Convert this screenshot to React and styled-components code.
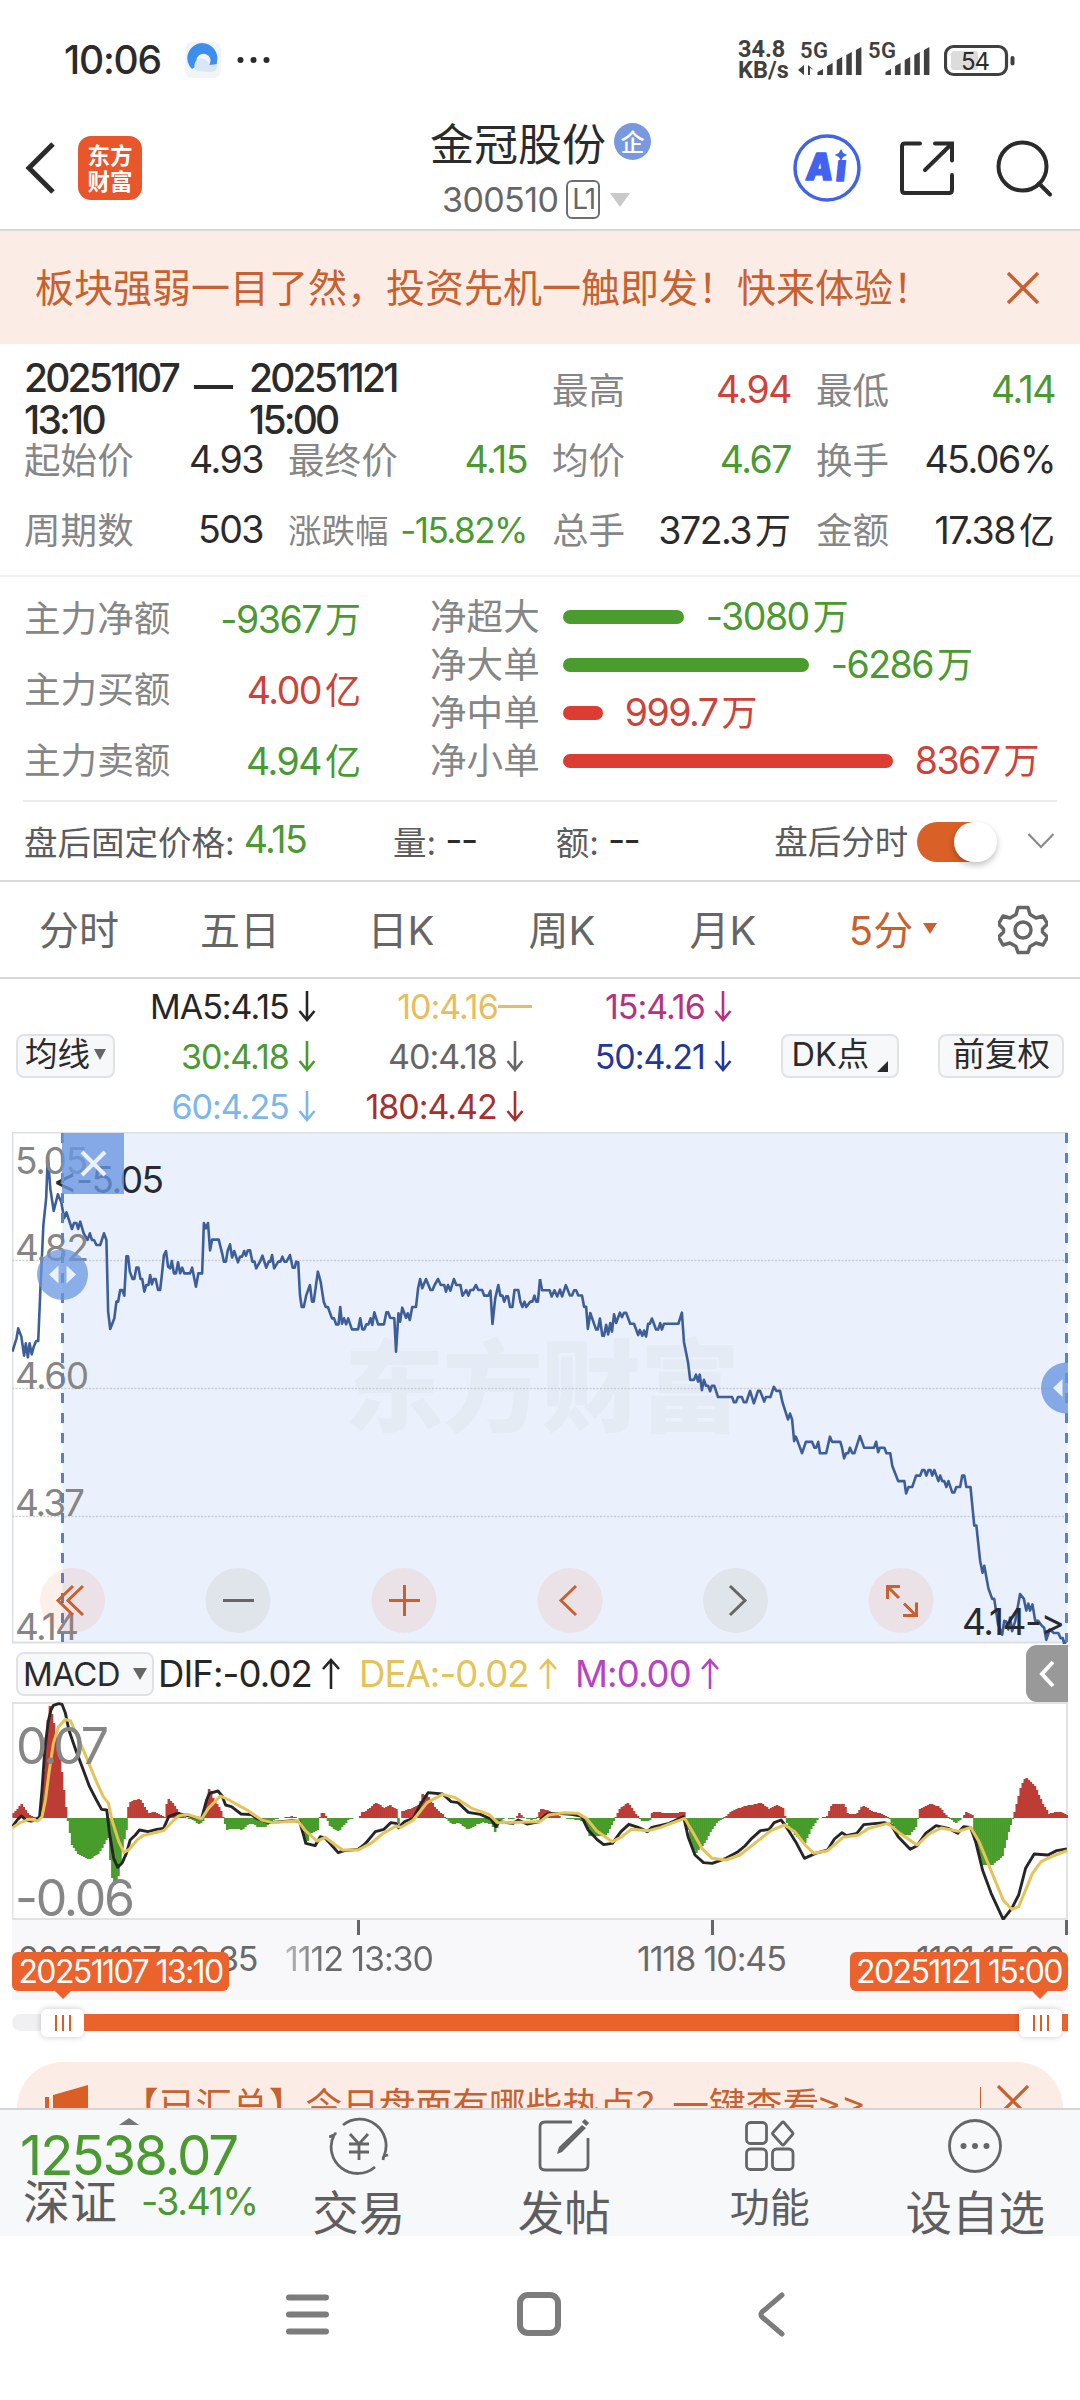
import React from 'react';
import styled, {createGlobalStyle, css} from 'styled-components';

const RED = '#cc4339'
const GREEN = '#4a9a31'
const DARK = '#2b2b2b'
const GRAY = '#868686'
const MID = '#666'
const ORANGE = '#c9602f'

const stats = [
  ['最高', '4.94', '', RED], ['最低', '4.14', '', GREEN],
  ['起始价', '4.93', '', DARK], ['最终价', '4.15', '', GREEN], ['均价', '4.67', '', GREEN], ['换手', '45.06%', '', DARK],
  ['周期数', '503', '', DARK], ['涨跌幅', '-15.82%', '', GREEN], ['总手', '372.3', '万', DARK], ['金额', '17.38', '亿', DARK],
]

const mainFlow = [
  ['主力净额', '-9367', '万', GREEN],
  ['主力买额', '4.00', '亿', RED],
  ['主力卖额', '4.94', '亿', GREEN],
]

const netFlow = [
  ['净超大', 121, '-3080', GREEN, '#4a9c2f'],
  ['净大单', 246, '-6286', GREEN, '#4a9c2f'],
  ['净中单', 40, '999.7', RED, '#dd3c33'],
  ['净小单', 330, '8367', RED, '#dd3c33'],
]

const averages = [
  ['MA5:4.15', '#262626', 'down'], ['10:4.16', '#e8bd5c', 'flat'], ['15:4.16', '#b5327f', 'down'],
  ['30:4.18', GREEN, 'down'], ['40:4.18', MID, 'down'], ['50:4.21', '#23379b', 'down'],
  ['60:4.25', '#7db6e8', 'down'], ['180:4.42', '#a53030', 'down'],
]

// price line, left and right half of the session
const priceLeft = '36,680 48,640 53,610 62,635 70,692 75,655 81,697 86,655 92,688 98,665 105,648 111,648 117,500 126,300 134,220 139,90 146,190 156,258 168,208 178,232 186,280 193,262 209,312 215,294 222,294 227,312 233,290 243,325 254,345 261,325 267,345 273,345 280,360 291,360 302,325 309,345 314,560 320,612 332,580 338,530 343,530 349,495 355,495 361,512 367,394 372,394 377,440 385,462 390,462 396,428 402,428 408,462 413,462 419,500 425,480 431,480 436,450 441,478 446,462 452,462 459,495 465,495 470,450 476,390 482,378 488,425 494,430 499,408 505,445 511,445 517,412 523,445 529,428 535,445 552,445 558,428 564,460 569,485 576,445 587,445 592,294 598,310 604,294 610,376 616,344 635,344 645,385 650,410 656,410 661,378 668,358 674,398 680,378 691,412 697,395 703,395 709,378 714,392 720,376 726,376 733,410 739,410 744,430 755,410 762,392 773,428 780,410 785,410 790,390 796,430 808,410 814,410 820,395 826,410 832,410 842,390 850,428 856,428 860,410 866,412 871,510 876,546 882,546 889,512 900,480 906,530 911,530 923,440 931,470 940,530 946,546 952,546 964,580 970,580 976,598 983,598 988,546 993,596 999,580 1005,598 1011,580 1022,613 1040,613 1046,580 1052,613 1058,613 1064,598 1070,598 1076,580 1081,600 1087,562 1098,598 1115,598 1122,562 1127,562 1133,578 1145,580 1150,680 1157,565 1162,590 1168,548 1179,578 1184,565 1190,585 1197,546 1208,546 1214,490 1220,462 1226,490 1237,462 1250,495 1256,495 1262,480 1272,462 1280,480 1290,480 1295,500 1301,480 1308,497 1318,462 1325,480 1337,480 1343,512 1354,495 1360,512 1366,495 1374,495 1382,480 1389,495 1400,495 1406,512 1418,512 1424,497 1430,597 1438,520 1447,480 1453,512 1459,512 1464,530 1470,514 1475,514 1481,546 1488,546 1494,495 1505,495 1511,530 1517,546 1523,530 1528,546 1540,530 1546,530 1552,512 1557,530 1562,530 1568,462'
const priceRight = '0,448 6,480 28,480 34,498 42,480 50,498 58,478 64,498 75,465 87,495 93,495 99,480 105,480 111,495 122,495 128,528 134,528 139,592 146,546 163,594 168,594 174,562 181,612 186,612 192,580 198,608 204,575 209,600 215,550 221,575 232,545 238,558 244,545 250,545 262,577 273,577 285,610 290,595 297,612 302,597 308,614 314,577 319,577 325,562 337,594 343,594 349,575 354,594 360,577 402,577 412,545 418,630 430,690 436,740 447,740 453,725 459,745 464,725 470,770 476,740 482,757 488,757 494,773 499,757 506,757 517,790 558,790 563,805 569,805 575,790 586,790 592,805 599,805 610,772 621,808 633,772 639,772 651,803 656,790 669,790 679,760 686,772 697,772 704,805 720,855 726,838 732,855 738,918 743,905 761,953 772,920 790,920 797,937 802,937 808,920 813,953 831,953 842,905 848,920 872,920 877,937 883,968 889,953 895,953 900,937 907,953 913,953 929,903 941,937 970,937 976,920 982,950 987,937 1000,937 1006,953 1017,953 1023,990 1040,1034 1058,1034 1063,1070 1070,1051 1081,1051 1092,1018 1104,1018 1110,1002 1116,1002 1122,1018 1128,1002 1134,1002 1139,1018 1145,1002 1157,1034 1162,1018 1168,1034 1174,1034 1180,1051 1186,1034 1197,1067 1203,1067 1209,1051 1220,1051 1226,1018 1232,1018 1238,1051 1250,1051 1261,1163 1267,1163 1278,1265 1285,1300 1290,1280 1302,1345 1313,1376 1319,1376 1330,1450 1342,1480 1348,1440 1354,1442 1360,1465 1365,1430 1371,1470 1380,1440 1394,1362 1405,1376 1412,1410 1418,1390 1423,1410 1430,1392 1438,1440 1447,1440 1458,1455 1464,1460 1470,1495 1480,1465 1492,1475 1505,1475 1512,1490 1518,1490 1523,1510 1528,1495'

const difLeft = '36,560 50,540 62,528 75,540 90,543 105,540 115,530 122,450 130,330 140,245 148,210 155,196 170,191 180,193 190,220 200,270 220,330 240,385 260,440 280,480 295,508 310,510 318,580 330,655 342,682 355,668 367,640 378,600 393,585 405,570 430,575 455,568 475,565 490,530 515,520 545,527 585,537 600,480 608,460 633,453 645,468 655,495 672,500 700,522 730,524 745,535 780,548 850,542 870,545 880,580 888,610 915,617 930,590 945,595 965,618 982,638 1000,632 1040,628 1060,612 1090,575 1115,568 1135,548 1150,550 1157,563 1175,545 1200,535 1220,495 1243,458 1285,462 1310,485 1330,488 1360,517 1395,523 1425,537 1440,560 1450,545 1490,550 1505,540 1530,552 1568,545'
const difRight = '0,540 20,522 50,520 90,523 120,528 140,570 165,598 185,614 210,610 235,575 258,553 285,562 312,575 325,562 375,550 417,530 430,590 450,645 475,668 500,670 540,655 575,635 595,618 615,595 640,572 665,568 680,548 700,540 715,560 745,610 768,655 800,640 835,630 855,597 877,578 890,587 920,580 940,554 1000,548 1020,555 1040,590 1075,628 1095,617 1120,580 1150,557 1185,565 1213,580 1230,560 1250,562 1265,605 1285,690 1310,760 1345,838 1370,805 1390,765 1410,685 1435,642 1475,645 1500,632 1530,627'
const deaLeft = '36,563 60,547 85,538 110,543 122,530 132,480 142,400 155,310 170,260 190,238 205,243 225,290 250,350 280,425 300,470 315,490 325,540 345,605 360,637 375,628 400,598 415,587 475,572 500,545 520,527 545,523 585,537 605,505 640,468 665,480 720,512 760,540 790,548 865,542 885,570 920,603 945,592 970,612 995,630 1040,630 1080,608 1110,582 1150,558 1165,562 1200,540 1240,488 1285,463 1320,472 1370,505 1420,523 1445,548 1568,545'
const deaRight = '0,545 25,525 70,518 110,520 135,535 165,573 210,605 235,592 265,568 315,572 350,562 420,535 440,570 470,625 500,655 540,660 580,645 630,605 670,572 710,555 740,575 770,615 795,640 835,632 880,592 925,585 955,565 1010,550 1045,580 1095,615 1130,582 1165,564 1215,574 1250,562 1275,605 1305,680 1345,780 1370,808 1390,800 1430,700 1455,665 1490,648 1530,632'

const histLeft = '36,15 60,42 80,10 95,2 112,5 122,110 130,250 141,338 152,290 162,230 175,150 185,60 192,0 196,-20 205,-80 225,-110 255,-125 285,-105 308,-60 312,-60 320,-170 330,-206 342,-170 350,-100 365,-30 368,0 370,45 385,52 403,58 418,30 430,12 442,20 465,8 475,2 483,60 495,50 515,20 525,10 535,2 560,-8 575,-18 587,-8 592,30 605,95 615,60 640,20 645,0 655,-35 680,-32 700,-36 715,-22 730,-15 745,-28 765,-28 785,-10 800,-2 815,0 845,6 860,0 872,-20 885,-82 900,-45 920,-35 923,-2 933,20 945,2 955,-25 980,-40 1000,-15 1012,-2 1040,0 1045,15 1065,25 1090,47 1110,30 1130,38 1150,25 1153,-20 1165,20 1190,28 1215,40 1222,72 1245,62 1260,30 1285,8 1290,0 1310,-18 1330,-15 1355,-35 1380,-20 1400,-12 1425,-20 1437,-50 1443,-10 1465,0 1490,-5 1505,17 1515,2 1540,-5 1556,0 1566,25'
const histRight = '0,27 20,22 45,12 60,0 120,-8 130,-15 140,-55 165,-55 190,-50 215,0 230,30 252,45 270,20 285,0 290,-8 315,-10 320,15 330,20 360,15 415,17 417,25 422,-10 435,-80 450,-105 475,-75 495,-35 515,-8 530,0 550,18 575,30 600,38 640,45 660,28 685,38 705,28 710,-10 740,-55 765,-78 785,-30 805,0 830,3 845,42 880,42 890,12 915,12 935,38 960,20 990,12 1010,2 1020,-20 1045,-50 1070,-52 1090,-25 1100,28 1130,42 1155,35 1180,3 1190,-5 1205,-15 1222,0 1235,20 1252,8 1256,-60 1280,-140 1308,-142 1340,-115 1355,-50 1368,-5 1375,20 1395,100 1408,123 1435,95 1455,45 1475,12 1500,20 1528,10'

const HALF = 'scale(.34438 .33333)'
const SQUARE = 'scale(.34438)'

function parse(s) {
  return s.split(' ').map(p => p.split(',').map(Number))
}

// fills the gaps between the key points with one bar for each 5 minutes
function makeBars(s) {
  const pts = parse(s)
  const bars = []
  let k = 0
  for(let x = pts[0][0]; x < pts[pts.length-1][0]; x += 5.85) {
    while(pts[k+1][0] < x) k++
    const [x0, h0] = pts[k]
    const [x1, h1] = pts[k+1]
    bars.push({x, h: Math.round((h0 + (h1-h0)*(x-x0)/(x1-x0))/3)*3})
  }
  return bars
}

function Hist({data}) {
  return makeBars(data).map(b => b.h !== 0 && <rect key={b.x} x={b.x} width="7.500"
    y={b.h > 0 ? 534-b.h : 534} height={Math.abs(b.h)} fill={b.h > 0 ? '#bd3c35' : '#479c2b'} />)
}

function Line({points, color, width}) {
  return <polyline points={points} fill="none" stroke={color} strokeWidth={width}
    strokeLinejoin="round" vectorEffect="non-scaling-stroke" />
}

function Arrow({dir, h=32}) {
  return <svg width="18" height={h} viewBox="0 0 18 32" fill="none" stroke="currentColor" strokeWidth="2.6">
    {dir==='down' ? <path d="M9 1v29M1.500 21l7.500 9 7.500-9" /> : <path d="M9 31V2M1 11l8-9 8 9" />}
  </svg>
}

function Amount({c, small, unit, children}) {
  return <Value c={c} small={small}>{children}{unit && <Unit>{unit}</Unit>}</Value>
}

function StatusBar() {
  return <Status>
    <Clock>10:06</Clock>
    <svg width="38" height="38" viewBox="0 0 38 38">
      <rect x="1" y="1" width="36" height="36" rx="8" fill="#f1f4f8" />
      <path d="M8 28A15 15 0 1 1 33 20c0 4-1 7-3 8l-5-4a7 7 0 1 0-11 0z" fill="#3c8fee" />
      <path d="M13 30a7 7 0 0 1 2-12c7-2 9 4 11 6l7-1c1 5-2 8-6 8z" fill="#dbe6f5" />
    </svg>
    <Dots width="34" height="8" viewBox="0 0 34 8" fill={DARK}>
      <circle cx="3.500" cy="4" r="3" /><circle cx="16.500" cy="4" r="3" /><circle cx="29.500" cy="4" r="3" />
    </Dots>
    <Speed>34.8<br/>KB/s</Speed>
    <Signals width="134" height="38" viewBox="798 40 134 38" fill="#404040">
      <text x="800" y="57" fontFamily="Roboto" fontSize="22" fontWeight="600" textLength="28">5G</text>
      <text x="868" y="57" fontFamily="Roboto" fontSize="22" fontWeight="600" textLength="28">5G</text>
      <path d="M804 64v10l-6-5zM808 64v10h2v-7l4 2z" />
      {[0, 68].map(d => [6, 12, 18, 23, 28].map((h, i) =>
        <path key={d+i} d={`M${817.5+d+i*9.6} 74v${3-h}l5.500-3v${h}z`} />))}
    </Signals>
    <svg width="72" height="34" viewBox="944 42 72 34">
      <rect x="945.500" y="45.500" width="61" height="28" rx="8" fill="none" stroke="#404040" strokeWidth="3.200" />
      <rect x="951" y="50" width="27" height="19" rx="3" fill="#dcdcdc" />
      <rect x="1010.500" y="55" width="4" height="9.500" rx="2" fill="#404040" />
      <text x="961" y="68.500" fontFamily="Inter" fontSize="24" fontWeight="400" textLength="29" fill={DARK}>54</text>
    </svg>
  </Status>
}

function TitleBar() {
  return <Title>
    <svg width="30" height="54" viewBox="0 0 30 54" fill="none" stroke={DARK} strokeWidth="5">
      <path d="M28 3L4 27l24 24" />
    </svg>
    <Logo>东方<br/>财富</Logo>
    <Name>
      <NameRow>金冠股份<Badge>企</Badge></NameRow>
      <CodeRow>300510<Level>L1</Level><Tri w={10.5} h={14} c="#c9c9c9" /></CodeRow>
    </Name>
    <Tools>
      <svg width="70" height="70" viewBox="791 132 70 70">
        <circle cx="826" cy="167" r="32" fill="none" stroke="#4263e6" strokeWidth="3.500" />
        <g fill="#4263f2" stroke="#4263f2" strokeWidth="1.500" strokeLinejoin="round" fontFamily="Inter" fontSize="37" fontWeight="900">
          <text transform="translate(804 178.500) skewX(-6)" textLength="27" lengthAdjust="spacingAndGlyphs">A</text>
          <text transform="translate(834 180) skewX(-6)" textLength="10" lengthAdjust="spacingAndGlyphs">ı</text>
        </g>
        <path d="M840 148l2.200 4 4 2-4 2-2.200 4-2.200-4-4-2 4-2z" fill="#4263f2" />
      </svg>
      <svg width="58" height="58" viewBox="900 138 58 58" fill="none" stroke={DARK} strokeWidth="4" strokeLinecap="round">
        <path d="M920 142.500h-15q-3 0-3 3v43.500q0 3 3 3h44q3 0 3-3v-15M925 169l26-25.500M935 142.500h17v17" />
      </svg>
      <svg width="58" height="58" viewBox="995 137 58 58" fill="none" stroke={DARK} strokeWidth="4" strokeLinecap="round">
        <circle cx="1022.500" cy="164.500" r="24" /><path d="M1039 181.500l11 11" />
      </svg>
    </Tools>
  </Title>
}

function PriceChart() {
  const orangeBg = 'rgba(232,100,40,.1)'
  const grayBg = 'rgba(150,150,110,.12)'
  return <Chart height="512" viewBox="12 1132 1056 512">
    <rect x="62.500" y="1133" width="1005" height="509" fill="#eaf1fc" />
    <path d="M12 1132.500h1056M12.500 1132v511M12 1642.500h1056" stroke="#dcdfe4" strokeWidth="2" />
    <text x="344" y="1424" fontFamily="Noto Sans CJK SC" fontSize="100" fontWeight="900" textLength="396" fill="#e4ebf5">东方财富</text>
    <path d="M12 1260.500h1056M12 1388.500h1056M12 1516.500h1056" stroke="#c9ced8" strokeWidth="1.500" strokeDasharray="2 1.500" />
    <g transform={`translate(0 1125) ${HALF}`}><Line points={priceLeft} color="#3d5e99" width="2.600" /></g>
    <g transform={`translate(540 1125) ${SQUARE}`}><Line points={priceRight} color="#3d5e99" width="2.600" /></g>
    <Labels size={37}>
      <text x="15" y="1173.500" textLength="73">5.05</text>
      <text x="15" y="1261" textLength="74">4.82</text>
      <text x="15" y="1388.500" textLength="74">4.60</text>
      <text x="15" y="1516" textLength="70">4.37</text>
      <text x="15" y="1639.500" textLength="64">4.14</text>
      <text x="53" y="1193" textLength="111" fill="#252a33">&lt;-5.05</text>
      <text x="962" y="1634.500" textLength="103" fill="#252a33">4.14-&gt;</text>
    </Labels>
    <path d="M62.500 1133v509M1066.500 1133v509" stroke="#5682cb" strokeWidth="3" strokeDasharray="10 10" />
    <rect x="62" y="1133" width="62" height="61" fill="#6a97e0" opacity=".8" />
    <path d="M82 1152l23 23M105 1152l-23 23" stroke="#eaf1fc" strokeWidth="4" />
    <circle cx="62.500" cy="1274.500" r="25.500" fill="#6a97e0" opacity=".75" />
    <path d="M49 1274.500l9.500-9v18zM76 1274.500l-9.500-9v18z" fill="#eaf1fc" />
    <circle cx="1066.500" cy="1388" r="25.500" fill="#6a97e0" opacity=".8" />
    <path d="M1053 1388l9.500-9v18z" fill="#eaf1fc" />
    {[72.5, 238, 404, 570, 735.5, 901].map((cx, i) =>
      <circle key={cx} cx={cx} cy="1600.500" r="32.500" fill={i===1 || i===4 ? grayBg : orangeBg} />)}
    <g fill="none" stroke={ORANGE} strokeWidth="3">
      <path d="M73 1586l-15 14.500 15 14.500M83 1586l-15 14.500 15 14.500" />
      <path d="M389 1600.500h31M404.500 1585v31" />
      <path d="M576 1586l-15 14.500 15 14.500" />
      <path d="M887.500 1599v-12.500h12.500M888 1587l11 11M904 1603.500l11 11M903 1615.500h13.500v-13" />
      <path d="M223 1600.500h31M730 1586l15 14.500-15 14.500" stroke={MID} />
    </g>
  </Chart>
}

function MacdChart() {
  return <Chart height="218" viewBox="12 1702 1056 218">
    <path d="M12 1703h1056M12.500 1702v218M12 1919h1056M1067 1702v218" stroke="#e2e2e2" strokeWidth="2" fill="none" />
    <g transform={`translate(0 1640) ${HALF}`}>
      <Hist data={histLeft} />
      <Line points={difLeft} color="#262626" width="2.900" />
      <Line points={deaLeft} color="#e5c358" width="3" />
    </g>
    <g transform={`translate(540 1640) ${HALF}`}>
      <Hist data={histRight} />
      <Line points={difRight} color="#262626" width="2.900" />
      <Line points={deaRight} color="#e5c358" width="3" />
    </g>
    <Labels size={50}>
      <text x="16" y="1764" textLength="93">0.07</text>
      <text x="15" y="1916" textLength="120">-0.06</text>
    </Labels>
  </Chart>
}

function NavIcon({name}) {
  return <svg width="60" height="60" viewBox="-30 -30 60 60" fill="none" stroke={MID} strokeWidth="2.800">
    {name==='trade' && <>
      <path d="M-16-21A26.500 26.500 0 0 1 25 10l4-1M16 21A26.500 26.500 0 0 1-25-11l-5 2M-25-11l2-2M25 10l-1 4" />
      <path d="M-9-12L0-2l9-10M0-2v16M-10-2h20M-10 6h20" />
    </>}
    {name==='post' && <>
      <path d="M8-24h-27q-5 0-5 5v38q0 5 5 5h38q5 0 5-5V-8" />
      <path d="M-7 8l2-7L18-21l4 3L-2 6z" fill={MID} stroke="none" />
      <path d="M20-22l3-3" strokeWidth="6" />
    </>}
    {name==='more' && <>
      <rect x="-23.500" y="-23.500" width="20" height="21" rx="4" /><rect x="-23.500" y="3" width="20" height="20.500" rx="4" />
      <rect x="2.500" y="3" width="20.500" height="20.500" rx="4" /><path d="M12-23.500q1-1 2 0l8.500 10q1 1 0 2L14-1.500q-1 1-2 0L3-11.500q-1-1 0-2z" />
    </>}
    {name==='add' && <>
      <circle r="25.500" />
      <g fill={MID} stroke="none"><circle cx="-11.500" r="3" /><circle r="3" /><circle cx="11.500" r="3" /></g>
    </>}
  </svg>
}

function App() {
  return (
    <Page>
      <GlobalStyle />
      <StatusBar />
      <TitleBar />

      <Promo>
        板块强弱一目了然，投资先机一触即发！快来体验！
        <svg width="32" height="32" viewBox="0 0 32 32" stroke={ORANGE} strokeWidth="3.500"><path d="M1 1l30 30M31 1L1 31" /></svg>
      </Promo>

      <Stats>
        <Dates>
          <span>20251107<br/>13:10</span>
          <Dash />
          <span>20251121<br/>15:00</span>
        </Dates>
        {stats.map(([label, value, unit, color]) => <Stat key={label}>
          <Label small={label==='涨跌幅'}>{label}</Label>
          <Amount c={color} unit={unit} small={label==='涨跌幅'}>{value}</Amount>
        </Stat>)}
      </Stats>

      <Flows>
        <MainFlow>
          {mainFlow.map(([label, value, unit, color]) => <Stat key={label}>
            <Label>{label}</Label><Amount c={color} unit={unit}>{value}</Amount>
          </Stat>)}
        </MainFlow>
        <NetFlow>
          {netFlow.map(([label, width, value, color, bar]) => <NetRow key={label}>
            <Label>{label}</Label><Bar c={bar} style={{width}} /><Amount c={color} unit="万">{value}</Amount>
          </NetRow>)}
        </NetFlow>
      </Flows>

      <AfterHours>
        <Pair w={370}>盘后固定价格:<Value c={GREEN}>4.15</Value></Pair>
        <Pair w={163}>量:<Value c={DARK}>--</Value></Pair>
        <Pair w={219}>额:<Value c={DARK}>--</Value></Pair>
        <Lift>盘后分时</Lift>
        <Toggle><Knob /></Toggle>
        <svg width="28" height="18" viewBox="0 0 28 18" fill="none" stroke="#8a8a8a" strokeWidth="2.200"><path d="M1.500 2L14 15 26.500 2" /></svg>
      </AfterHours>

      <Tabs>
        {['分时', '五日', '日K', '周K', '月K'].map(t => <Tab key={t}>{t}</Tab>)}
        <Tab active>5分<Tri w={7} h={11} c={ORANGE} /></Tab>
        <Gear>
          <svg width="50" height="50" viewBox="-25 -25 50 50" fill="none" stroke={MID} strokeWidth="3.500" strokeLinejoin="round">
            <path d="M-5-22.500h10l2 7 6 3.500 7-2 4.500 8-5 5v3l5 5-4.500 8-7-2-6 3.500-2 6h-10l-2-6-6-3.500-7 2-4.500-8 5-5v-3l-5-5 4.500-8 7 2 6-3.500z" />
            <circle r="8" />
          </svg>
        </Gear>
      </Tabs>

      <Indicators>
        <Chip w={99}>均线<Tri w={6.5} h={11} c={MID} gap={4} /></Chip>
        <Averages>
          {averages.map(([text, color, dir]) => <Average key={text} c={color} flat={dir==='flat'}>
            {text}{dir==='flat' ? <Flat /> : <Arrow dir={dir} />}
          </Average>)}
        </Averages>
        <Chip w={119} left={48}>DK点<Corner /></Chip>
        <Chip w={126} left={39}>前复权</Chip>
      </Indicators>

      <PriceChart />

      <MacdHead>
        <Chip w={138} wide>MACD<Tri w={7} h={12} c={MID} gap={13} /></Chip>
        <Legend c="#262626" w={201}>DIF:-0.02<Arrow dir="up" /></Legend>
        <Legend c="#e5c358" w={216}>DEA:-0.02<Arrow dir="up" /></Legend>
        <Legend c="#b942c4" w={160}>M:0.00<Arrow dir="up" /></Legend>
        <Collapse>
          <svg width="16" height="28" viewBox="0 0 16 28" fill="none" stroke="#fff" strokeWidth="4"><path d="M14 2L3 14l11 12" /></svg>
        </Collapse>
      </MacdHead>

      <MacdChart />

      <Axis>
        <Ticks><i /><i /><i /></Ticks>
        <Times>
          <Time w={238}>20251107 09:35</Time>
          <Time w={150} left={29} fade>1112 13:30</Time>
          <Time w={152} left={202}>1118 10:45</Time>
          <Time w={150} left={127}>1121 15:00</Time>
        </Times>
        <Tag start>20251107 13:10</Tag>
        <Tag>20251121 15:00</Tag>
      </Axis>

      <Slider>
        <Empty />
        <Handle><i /><i /><i /></Handle>
        <Filled />
        <Handle><i /><i /><i /></Handle>
        <End />
      </Slider>

      <News>
        <svg width="44" height="46" viewBox="0 0 44 46" fill="#d95f27"><path d="M0 12h4v34H0zM8 10L43 0v46H8z" /></svg>
        <NewsText>【已汇总】今日盘面有哪些热点？一键查看<span>&gt;&gt;</span></NewsText>
        <Divider />
        <svg width="32" height="32" viewBox="0 0 32 32" stroke={ORANGE} strokeWidth="3.200"><path d="M1 1l30 30M31 1L1 31" /></svg>
      </News>

      <BottomNav>
        <Index>
          <Up />
          <IndexPrice>12538.07</IndexPrice>
          <IndexRow>深证<Value c={GREEN}>-3.41%</Value></IndexRow>
        </Index>
        <NavItem><NavIcon name="trade" />交易</NavItem>
        <NavItem><NavIcon name="post" />发帖</NavItem>
        <NavItem small><NavIcon name="more" />功能</NavItem>
        <NavItem><NavIcon name="add" />设自选</NavItem>
      </BottomNav>

      <SystemNav>
        <svg width="500" height="48" viewBox="285 2290 500 48" fill="none" stroke="#7c7c7c" strokeWidth="6" strokeLinecap="round" strokeLinejoin="round">
          <path d="M289 2297.500h37M289 2314.500h37M289 2331.500h37" />
          <rect x="520" y="2295" width="38" height="38" rx="8" />
          <path d="M782 2295l-20 17q-2 2.500 0 5l20 17" strokeWidth="5" />
        </svg>
      </SystemNav>
    </Page>
  );
}

const GlobalStyle = createGlobalStyle`
  body {
    margin: 0;
    background: #fff;
  }
  * {
    box-sizing: border-box;
  }
  svg {
    display: block;
    flex-shrink: 0;
  }
`
const Page = styled.div`
  width: 1080px;
  height: 2400px;
  overflow: hidden;
  display: flex;
  flex-direction: column;
  font-family: Inter, 'Noto Sans CJK SC', sans-serif;
  color: ${DARK};
  white-space: nowrap;
  > * {
    flex-shrink: 0;
  }
`
const Tri = styled.i`
  border: ${p => p.w}px solid transparent;
  border-top: ${p => p.h}px solid ${p => p.c};
  border-bottom: 0;
  margin-left: ${p => p.gap || 10}px;
`
const Status = styled.header`
  height: 106px;
  padding: 13px 64px 0 64px;
  display: flex;
  align-items: center;
`
const Clock = styled.div`
  width: 120px;
  font-size: 39px;
  font-weight: 450;
  letter-spacing: -1.2px;
`
const Dots = styled.svg`
  margin-left: 15px;
`
const Speed = styled.div`
  margin-left: auto;
  width: 60px;
  font-family: Roboto, sans-serif;
  font-size: 23.5px;
  line-height: 21px;
  font-weight: 700;
  color: #404040;
`
const Signals = styled.svg`
  margin-right: 12px;
`
const Title = styled.div`
  height: 125px;
  border-bottom: 2px solid #d9d9d9;
  padding: 0 27px 0 25px;
  display: flex;
  align-items: center;
`
const Logo = styled.div`
  width: 64px;
  height: 64px;
  margin-left: 23px;
  border-radius: 13px;
  background: #e9562b;
  color: #fff;
  font-family: 'Noto Sans CJK SC', sans-serif;
  font-size: 22.5px;
  font-weight: 700;
  line-height: 26px;
  padding-top: 5px;
  text-align: center;
`
const Name = styled.div`
  width: 650px;
  height: 118px;
  display: flex;
  flex-direction: column;
  padding-left: 288px;
`
const NameRow = styled.div`
  height: 66px;
  display: flex;
  align-items: center;
  font-family: 'Noto Sans CJK SC', sans-serif;
  font-size: 44px;
`
const Badge = styled.span`
  width: 37px;
  height: 37px;
  margin-left: 8px;
  border-radius: 50%;
  background: #7898df;
  color: #fff;
  font-size: 24px;
  line-height: 35px;
  font-weight: 500;
  text-align: center;
`
const CodeRow = styled.div`
  height: 50px;
  padding-left: 12px;
  display: flex;
  align-items: center;
  font-size: 34px;
  letter-spacing: -0.6px;
  color: ${MID};
`
const Level = styled.span`
  width: 34px;
  height: 39px;
  margin-left: 8px;
  border: 2px solid #6e6e6e;
  border-radius: 6px;
  font-size: 28px;
  line-height: 35px;
  letter-spacing: -2px;
  text-align: center;
`
const Tools = styled.div`
  flex: 1;
  display: flex;
  align-items: center;
  justify-content: space-between;
`
const Promo = styled.div`
  height: 113px;
  padding: 0 41px 5px 35px;
  display: flex;
  align-items: center;
  justify-content: space-between;
  background: #fbede6;
  color: ${ORANGE};
  font-family: 'Noto Sans CJK SC', sans-serif;
  font-size: 39px;
  svg {
    margin-top: 5px;
  }
`
const Stats = styled.section`
  height: 233px;
  padding: 11px 24px 0 24px;
  display: grid;
  grid-template-columns: repeat(4, 238px);
  grid-auto-rows: 70px;
  column-gap: 26px;
  border-bottom: 2px solid #f3f3f3;
`
const Dates = styled.div`
  grid-column: span 2;
  padding-top: 2px;
  display: flex;
  font-size: 39px;
  line-height: 42px;
  font-weight: 550;
  letter-spacing: -2.8px;
`
const Dash = styled.i`
  width: 39px;
  height: 4px;
  margin: 28px 16px 0 16px;
  background: ${DARK};
`
const Stat = styled.div`
  display: flex;
  align-items: center;
  justify-content: space-between;
`
const Label = styled.span`
  color: ${GRAY};
  font-family: 'Noto Sans CJK SC', sans-serif;
  font-size: ${p => p.small ? 33.5 : 36.6}px;
  line-height: 52px;
  padding-bottom: 3px;
`
const Value = styled.span`
  color: ${p => p.c};
  display: flex;
  align-items: baseline;
  line-height: 40px;
  margin-right: -1px;
  font-size: ${p => p.small ? 35 : 37.5}px;
  letter-spacing: ${p => p.small ? -1.5 : -1.5}px;
`
const Unit = styled.span`
  margin-left: 4px;
  font-family: 'Noto Sans CJK SC', sans-serif;
  font-size: 36px;
  line-height: 38px;
  letter-spacing: 0;
`
const Flows = styled.section`
  height: 225px;
  margin: 0 23px;
  display: flex;
  border-bottom: 2px solid #ececec;
`
const MainFlow = styled.div`
  width: 337px;
  padding: 6px 0 0 1px;
  display: grid;
  grid-template-rows: repeat(3, 71px);
`
const NetFlow = styled.div`
  flex: 1;
  padding: 15px 0 0 70px;
  display: grid;
  grid-template-rows: repeat(4, 48px);
`
const NetRow = styled.div`
  display: flex;
  align-items: center;
`
const Bar = styled.i`
  height: 14px;
  margin: 1px 22px 0 23px;
  border-radius: 7px;
  background: ${p => p.c};
`
const AfterHours = styled.section`
  height: 80px;
  padding: 0 25px 0 24px;
  display: flex;
  align-items: center;
  border-bottom: 2px solid #dadada;
  color: #5c5c5c;
  font-size: 33.5px;
`
const Lift = styled.span`
  padding-bottom: 3px;
`
const Pair = styled.div`
  width: ${p => p.w}px;
  padding-bottom: 2px;
  display: flex;
  align-items: center;
  gap: 9px;
`
const Toggle = styled.div`
  width: 80px;
  height: 40px;
  margin: 1px 30px 0 9px;
  border-radius: 20px;
  background: linear-gradient(90deg, #d96027 70%, transparent 70%);
  display: flex;
  justify-content: flex-end;
`
const Knob = styled.div`
  width: 43px;
  height: 40px;
  border-radius: 20px;
  background: #fff;
  box-shadow: 0 3px 6px rgba(0,0,0,.25);
`
const Tabs = styled.nav`
  height: 97px;
  display: flex;
  border-bottom: 2px solid #dadada;
`
const Tab = styled.div`
  width: 161px;
  padding: 0 3px 3px 0;
  display: flex;
  align-items: center;
  justify-content: center;
  font-size: 40px;
  color: ${p => p.active ? ORANGE : MID};
  ${p => p.active && css`padding-left: 18px;`}
`
const Gear = styled.div`
  flex: 1;
  display: flex;
  align-items: center;
  justify-content: center;
`
const Indicators = styled.section`
  height: 153px;
  padding: 1px 16px 0;
  display: flex;
  align-items: center;
`
const Chip = styled.div`
  width: ${p => p.w}px;
  height: 44px;
  margin-left: ${p => p.left || 0}px;
  padding-bottom: ${p => p.wide ? 0 : 3}px;
  display: flex;
  align-items: center;
  justify-content: center;
  background: #f7f8fa;
  border: 2px solid #e0e2e5;
  border-radius: 8px;
  font-size: ${p => p.wide ? 33 : 32.5}px;
  line-height: 40px;
  ${p => p.wide && css`letter-spacing: -.6px;`}
`
const Corner = styled.i`
  align-self: flex-end;
  margin: 0 0 1px 8px;
  border-left: 11px solid transparent;
  border-bottom: 11px solid ${DARK};
`
const Averages = styled.div`
  width: 619px;
  display: grid;
  grid-template-columns: 201px 208px 208px;
  grid-auto-rows: 50px;
`
const Average = styled.div`
  display: flex;
  align-items: center;
  justify-content: flex-end;
  font-size: 34px;
  letter-spacing: -1px;
  color: ${p => p.c};
  margin-right: ${p => p.flat ? -8 : 0}px;
  svg {
    margin-left: 9px;
  }
`
const Flat = styled.i`
  width: 34px;
  height: 3px;
  background: currentColor;
`
const Chart = styled.svg`
  width: 1056px;
  margin: 0 12px;
`
const Labels = styled.g`
  font-family: Inter, sans-serif;
  font-size: ${p => p.size}px;
  font-feature-settings: 'calt' 0;
  fill: ${GRAY};
`
const MacdHead = styled.div`
  height: 58px;
  padding: 1px 12px 0 16px;
  display: flex;
  align-items: center;
`
const Legend = styled.div`
  width: ${p => p.w}px;
  padding-left: 4px;
  display: flex;
  align-items: center;
  font-size: 36.5px;
  letter-spacing: -0.9px;
  color: ${p => p.c};
  svg {
    margin-left: 10px;
  }
`
const Collapse = styled.div`
  width: 42px;
  height: 57px;
  margin-left: auto;
  border-radius: 11px 0 0 11px;
  background: #999;
  display: flex;
  align-items: center;
  justify-content: center;
`
const Axis = styled.div`
  position: relative;
  height: 80px;
  margin: 0 12px;
  background: #f8f8fb;
`
const Ticks = styled.div`
  height: 15px;
  display: grid;
  grid-template-columns: 348px 354px 354px;
  i {
    border-right: 3px solid ${MID};
  }
`
const Times = styled.div`
  display: flex;
  padding-left: 6px;
  color: #6a6a6a;
  font-size: 34px;
  line-height: 48px;
  letter-spacing: -1.1px;
`
const Time = styled.span`
  width: ${p => p.w}px;
  margin-left: ${p => p.left || 0}px;
  ${p => p.fade && css`
    background: linear-gradient(90deg, #bbb, #6a6a6a 40px);
    background-clip: text;
    color: transparent;
  `}
`
const Tag = styled.div`
  position: absolute;
  top: 32px;
  ${p => p.start ? 'left: 0;' : 'right: 0;'}
  width: ${p => p.start ? 217 : 218}px;
  height: 39px;
  border-radius: 6px;
  background: #ec622d;
  color: #fff;
  font-size: 32px;
  line-height: 40px;
  letter-spacing: -1.6px;
  text-align: center;
  &::after {
    content: '';
    position: absolute;
    top: 38px;
    ${p => p.start ? 'left: 42px;' : 'right: 19px;'}
    border: 9px solid transparent;
    border-top-color: #ec622d;
    border-bottom: 0;
  }
`
const Slider = styled.div`
  height: 62px;
  padding: 0 12px 17px;
  display: flex;
  align-items: center;
`
const Empty = styled.i`
  width: 29px;
  height: 17px;
  border-radius: 9px 0 0 9px;
  background: #f0f0f2;
`
const Filled = styled.i`
  flex: 1;
  height: 17px;
  background: #ec622d;
`
const End = styled.i`
  width: 6px;
  height: 17px;
  background: #ec622d;
`
const Handle = styled.div`
  width: 43px;
  height: 28px;
  border-radius: 6px;
  background: #fff;
  box-shadow: 0 0 6px rgba(0,0,0,.22);
  display: flex;
  align-items: center;
  justify-content: center;
  gap: 5px;
  i {
    width: 2px;
    height: 16px;
    background: #d95f27;
  }
`
const News = styled.div`
  height: 46px;
  margin: 0 17px;
  padding: 23px 20px 0 28px;
  border-radius: 46px 46px 0 0;
  background: #fbede6;
  color: ${ORANGE};
  display: flex;
  overflow: hidden;
`
const NewsText = styled.div`
  margin-left: 33px;
  width: 858px;
  height: 46px;
  font-family: 'Noto Sans CJK SC', sans-serif;
  font-size: 36.7px;
  line-height: 37px;
  span {
    letter-spacing: 4px;
  }
`
const Divider = styled.i`
  width: 1px;
  height: 40px;
  margin: 2px 16px 0 0;
  background: ${ORANGE};
`
const BottomNav = styled.nav`
  height: 128px;
  border-top: 2px solid #d3d5d9;
  background: #f7f8fa;
  display: flex;
  overflow: hidden;
`
const Index = styled.div`
  width: 256px;
  padding: 8px 0 0 20px;
`
const Up = styled.div`
  width: 0;
  margin-left: 99px;
  border: 10px solid transparent;
  border-bottom: 7px solid #777;
  border-top: 0;
`
const IndexPrice = styled.div`
  font-size: 54.5px;
  line-height: 60px;
  letter-spacing: -2px;
  color: ${GREEN};
`
const IndexRow = styled.div`
  display: flex;
  align-items: center;
  gap: 24px;
  padding-left: 3px;
  margin-top: -8px;
  font-size: 47px;
  line-height: 50px;
  color: #5e5e5e;
`
const NavItem = styled.div`
  width: 205.5px;
  padding-top: 6px;
  display: flex;
  flex-direction: column;
  align-items: center;
  font-size: ${p => p.small ? 40 : 46.5}px;
  line-height: ${p => p.small ? 64 : 74}px;
  color: #5e5e5e;
`
const SystemNav = styled.footer`
  height: 164px;
  padding: 54px 0 0 285px;
`

export default App;
